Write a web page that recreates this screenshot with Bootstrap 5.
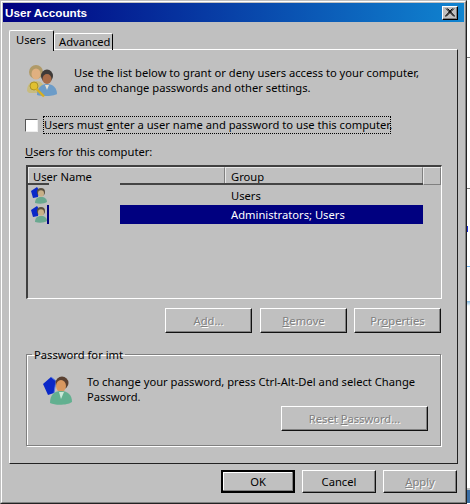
<!DOCTYPE html>
<html lang="en">
<head>
    <meta charset="UTF-8">
    <title>User Accounts</title>
    <link href="https://cdn.jsdelivr.net/npm/bootstrap@5.3.3/dist/css/bootstrap.min.css" rel="stylesheet">
    <style>
        html, body { height: 504px; overflow: hidden; }
        body {
            background: #fff;
            color: #000;
            font-family: "Noto Sans", sans-serif;
            font-size: 11.2px;
            line-height: 15px;
        }
        .win-frame {
            width: 467px;
            height: 504px;
            flex: none;
            background: #c0c0c0;
            border: 1px solid #c0c0c0;
            border-right-color: #222;
            border-bottom-color: #222;
        }
        .win-inner {
            height: 100%;
            padding: 1px;
            border: 1px solid #fff;
            border-right-color: #808080;
            border-bottom-color: #808080;
        }
        .win-title {
            height: 19px;
            padding: 0 2px;
            background: linear-gradient(90deg, #000080, #1084d0);
            color: #fff;
            font-family: "Liberation Sans", sans-serif;
            font-weight: 700;
            font-size: 11.7px;
        }
        .win-close {
            width: 16px;
            height: 14px;
            padding: 0;
            background: #c0c0c0;
            border: 1px solid;
            border-color: #fff #000 #000 #fff;
            box-shadow: inset -1px -1px 0 #808080;
        }
        .win-tabs { height: 28px; margin-left: 6px; padding-top: 8px; position: relative; z-index: 1; }
        .win-tab {
            width: 59px;
            height: 17px;
            margin-top: 3px;
            padding-left: 4px;
            line-height: 16px;
            border: 1px solid #fff;
            border-right: 1px solid #000;
            border-bottom: 0;
            border-radius: 2px 2px 0 0;
            color: #000;
            text-decoration: none;
        }
        .win-tab.active-tab {
            width: 45px;
            height: 21px;
            margin-top: 0;
            padding-left: 6px;
            line-height: 18px;
            background: #c0c0c0;
        }
        .win-panel {
            width: 449px;
            height: 415px;
            margin-left: 6px;
            margin-top: -1px;
            padding: 15px 0 0 15px;
            border: 1px solid #fff;
            border-right-color: #222;
            border-bottom-color: #222;
        }
        .win-intro { height: 51px; }
        .win-intro svg { margin: -1px 16px 0 1px; }
        .win-check-row { height: 18px; }
        .win-box {
            width: 13px;
            height: 13px;
            flex: none;
            background: #fff;
            border: 1px solid;
            border-color: #555 #eee #eee #555;
        }
        .win-focus {
            width: 348px;
            height: 18px;
            margin-left: 5px;
            line-height: 16px;
            white-space: nowrap;
            border: 1px dotted #000;
        }
        .win-label { margin-top: 10px; height: 21px; }
        .win-list {
            width: 416px;
            height: 134px;
            margin-left: 1px;
            background: #c0c0c0;
            border: 1px solid #fff;
            border-top: 2px solid #404040;
            border-left: 2px solid #404040;
        }
        .win-head { height: 18px; }
        .win-head div {
            height: 18px;
            padding-left: 5px;
            line-height: 17px;
            border: 1px solid;
            border-color: #e8e8e8 #808080 #808080 #e8e8e8;
        }
        .win-head div:nth-child(1) { width: 197px; padding-left: 4px; border-bottom-color: transparent; }
        .win-head div:nth-child(2) { width: 198px; }
        .win-head div:nth-child(3) { width: 18px; padding: 0; }
        .win-cut {
            height: 2px;
            margin-top: -2px;
            position: relative;
            background: linear-gradient(90deg, #444 21px, transparent 21px, transparent 92px, #444 92px, #444 395px, transparent 395px);
        }
        .win-row { height: 19px; }
        .win-row-first { margin-top: 1px; }
        .win-row-icon { width: 92px; padding-left: 3px; }
        .win-row-text { width: 303px; padding-left: 111px; line-height: 19px; }
        .win-row-sel { background: #000080; color: #fff; }
        .win-strip { width: 2px; height: 19px; background: #000080; }
        .win-actions { width: 415px; margin-left: 1px; margin-top: 9px; height: 44px; }
        .win-btn {
            height: 25px;
            width: 87px;
            padding: 0;
            background: #c0c0c0;
            color: #000;
            font: inherit;
            border: 1px solid;
            border-color: #fff #111 #111 #fff;
            box-shadow: inset -1px -1px 0 #808080;
        }
        .win-btn:disabled { color: #808080; text-shadow: 1px 1px 0 #fff; opacity: 1; }
        .win-actions .win-btn + .win-btn { margin-left: 7px; }
        .win-actions .win-btn:nth-child(1) { margin-right: 1px; }
        .win-group {
            width: 415px;
            height: 99px;
            margin-left: 1px;
            margin-top: -5px;
            padding: 0 12px 0 15px;
            border: 1px solid #808080;
            box-shadow: 1px 1px 0 #fff, inset 1px 1px 0 #fff;
        }
        .win-group legend {
            float: none;
            width: auto;
            margin: 0 0 0 -10px;
            padding: 0 2px;
            font-size: inherit;
            line-height: 15px;
        }
        .win-group-body { height: 30px; margin-top: 12px; }
        .win-group-body svg { margin-right: 13px; flex: none; }
        .win-group-body div { white-space: nowrap; }
        .win-reset { width: 147px; margin-left: auto; display: block; margin-top: 2px; }
        .win-foot { margin: 6px 0 0 218px; width: 236px; height: 23px; }
        .win-foot .win-btn { width: 74px; height: 23px; }
        .win-foot .win-default { border: 2px solid #000; box-shadow: inset -1px -1px 0 #808080, inset 1px 1px 0 #fff; }
        .win-desk { width: 3px; height: 504px; flex: none; }
        .win-tick { height: 1px; background: #808080; }
        .win-mark { width: 1px; height: 6px; background: #2030e0; }
        .win-light { height: 1px; background: #7ab8f0; }
        .win-fade { height: 5px; background: linear-gradient(#88c0e8, #fff); }
        .win-corner { height: 2px; background: #c0c0c0; }
        .win-blue { height: 13px; background: #3a6ea5; }
        .win-soft { filter: blur(0.35px); flex: none; }
    </style>
</head>
<body>
    <div class="d-flex">
        <div class="win-frame">
            <div class="win-inner">
                <div class="win-title d-flex align-items-center justify-content-between">
                    <span>User Accounts</span>
                    <button class="win-close d-flex align-items-center justify-content-center me-1" type="button" aria-label="Close">
                        <svg width="10" height="9" viewBox="0 0 10 9"><path d="M1 0.5L9 8.5M2.5 0.5L10 8.5M9 0.5L1 8.5M7.5 0.5L0 8.5" stroke="#000" stroke-width="1" fill="none"/></svg>
                    </button>
                </div>

                <div class="win-tabs d-flex align-items-start">
                    <a class="win-tab active-tab" href="#">Users</a>
                    <a class="win-tab" href="#">Advanced</a>
                </div>

                <div class="win-panel">
                    <div class="win-intro d-flex">
                        <svg class="win-soft" width="32" height="34" viewBox="0 0 32 34">
                            <ellipse cx="10" cy="8" rx="7" ry="7" fill="#b09a68"/>
                            <ellipse cx="10" cy="10" rx="4.5" ry="5.5" fill="#e0b080"/>
                            <path d="M1 27c0-7 4-10 9-10s8 3 8 8v4H3z" fill="#c8bc80"/>
                            <ellipse cx="21" cy="12" rx="6" ry="6.5" fill="#3e3a38"/>
                            <ellipse cx="21" cy="15" rx="4.5" ry="5" fill="#a86c48"/>
                            <path d="M11 31c0-7 4-11 10-11s10 4 10 10c-3 2-14 3-20 1z" fill="#6c9cc8"/>
                            <path d="M19 21l2 5 2-5z" fill="#e8e0d0"/>
                            <circle cx="8" cy="22" r="4" fill="#e0c030" stroke="#a08820" stroke-width=".8"/>
                            <path d="M10 24.5l8 8" stroke="#d8b020" stroke-width="2.4"/>
                        </svg>
                        <div>Use the list below to grant or deny users access to your computer,<br>and to change passwords and other settings.</div>
                    </div>

                    <div class="win-check-row d-flex align-items-center">
                        <span class="win-box"></span>
                        <div class="win-focus">Users must <u>e</u>nter a user name and password to use this computer.</div>
                    </div>

                    <div class="win-label"><u>U</u>sers for this computer:</div>

                    <div class="win-list">
                        <div class="win-head d-flex">
                            <div>User Name</div>
                            <div>Group</div>
                            <div></div>
                        </div>
                        <div class="win-cut"></div>
                        <div class="win-row win-row-first d-flex">
                            <div class="win-row-icon">
                                <svg class="win-soft" width="16" height="18" viewBox="0 0 16 18"><use href="#smallUser"/></svg>
                            </div>
                            <div class="win-row-text">Users</div>
                        </div>
                        <div class="win-row d-flex">
                            <div class="win-row-icon d-flex">
                                <svg class="win-soft" width="16" height="18" viewBox="0 0 16 18"><use href="#smallUser"/></svg>
                                <span class="win-strip"></span>
                            </div>
                            <div class="win-row-text win-row-sel">Administrators; Users</div>
                        </div>
                    </div>

                    <div class="win-actions d-flex justify-content-end">
                        <button class="win-btn" type="button" disabled>A<u>d</u>d...</button>
                        <button class="win-btn" type="button" disabled><u>R</u>emove</button>
                        <button class="win-btn" type="button" disabled>Pr<u>o</u>perties</button>
                    </div>

                    <fieldset class="win-group">
                        <legend>Password for imt</legend>
                        <div class="win-group-body d-flex">
                            <svg class="win-soft" width="32" height="32" viewBox="0 0 32 32">
                                <path d="M1 10L9 3l5 4-2 12-6 2z" fill="#0a28c8"/>
                                <path d="M9 3l5 4-2 12" fill="none" stroke="#5878e0"/>
                                <ellipse cx="20" cy="9" rx="6.5" ry="6.5" fill="#5a4030"/>
                                <ellipse cx="19" cy="12" rx="5" ry="6" fill="#d89860"/>
                                <path d="M8 29c0-8 4-12 11-12s11 4 11 11c-4 3-16 4-22 1z" fill="#62b090"/>
                                <path d="M17 18l2 7 3-7z" fill="#c8e8d8"/>
                            </svg>
                            <div>To change your password, press Ctrl-Alt-Del and select Change<br>Password.</div>
                        </div>
                        <button class="win-btn win-reset" type="button" disabled>Reset <u>P</u>assword...</button>
                    </fieldset>
                </div>

                <div class="win-foot d-flex justify-content-between">
                    <button class="win-btn win-default" type="button">OK</button>
                    <button class="win-btn" type="button">Cancel</button>
                    <button class="win-btn" type="button" disabled><u>A</u>pply</button>
                </div>
            </div>
        </div>
        <div class="win-desk">
            <div class="win-tick" style="margin-top: 57px"></div>
            <div class="win-tick" style="margin-top: 130px"></div>
            <div class="win-mark" style="margin-top: 37px"></div>
            <div class="win-light" style="margin-top: 34px"></div>
            <div class="win-fade" style="margin-top: 34px"></div>
            <div class="win-corner" style="margin-top: 182px"></div>
            <div class="win-blue"></div>
        </div>
    </div>

    <svg width="0" height="0" class="d-none">
        <symbol id="smallUser" viewBox="0 0 16 18">
            <path d="M0 5l6-4 2 3-1 7-5 1z" fill="#0a28c8"/>
            <ellipse cx="10" cy="6" rx="4" ry="4" fill="#5a5040"/>
            <ellipse cx="10" cy="7.5" rx="3" ry="3.2" fill="#c8b088"/>
            <path d="M4 17c0-4 2-6 6-6s6 2 6 5c-3 2-8 2-12 1z" fill="#6aa890"/>
        </symbol>
    </svg>
</body>
</html>
